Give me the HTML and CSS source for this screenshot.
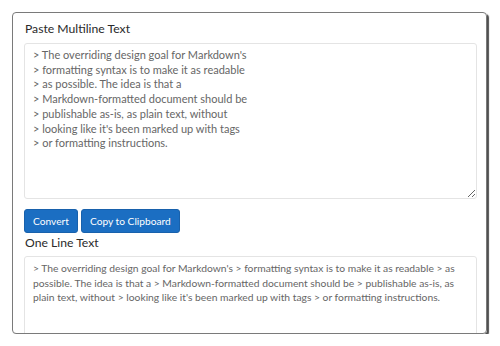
FILE: index.html
```html
<!DOCTYPE html>
<html lang="en">
<head>
  <meta charset="UTF-8">
  <meta name="viewport" content="width=device-width, initial-scale=1.0">
  <title>Multiline to One Line</title>
  <link rel="stylesheet" href="styles.css">
</head>
<body>

<div class="card">
  <h3 class="label">Paste Multiline Text</h3>
  <textarea class="box box-input" id="input">&gt; The overriding design goal for Markdown's
&gt; formatting syntax is to make it as readable
&gt; as possible. The idea is that a
&gt; Markdown-formatted document should be
&gt; publishable as-is, as plain text, without
&gt; looking like it's been marked up with tags
&gt; or formatting instructions.</textarea>

  <div class="actions">
    <button class="btn">Convert</button>
    <button class="btn">Copy to Clipboard</button>
  </div>

  <h3 class="label label-small">One Line Text</h3>
  <textarea class="box box-output" id="output">&gt; The overriding design goal for Markdown's &gt; formatting syntax is to make it as readable &gt; as possible. The idea is that a &gt; Markdown-formatted document should be &gt; publishable as-is, as plain text, without &gt; looking like it's been marked up with tags &gt; or formatting instructions.</textarea>
</div>

</body>
</html>
```

FILE: styles.css
```css
* {
  box-sizing: border-box;
  margin: 0;
  padding: 0;
}

body {
  background: #fff;
  font-family: Lato, sans-serif;
  color: #2a2a2a;
  overflow: hidden;
}

.card {
  margin: 12px 0 0 12px;
  width: 475px;
  height: 322px;
  padding: 7px 9px 0 11px;
  border: 1px solid #7a7a7a;
  border-radius: 4px;
  box-shadow: 2px 2px 1px #505050;
  overflow: hidden;
}

.label {
  font-size: 12.2px;
  font-weight: normal;
  line-height: 18px;
  margin-left: 1px;
  margin-bottom: 5px;
}

.label-small {
  margin-top: 1px;
  margin-bottom: 4px;
}

.box {
  display: block;
  width: 100%;
  border: 1px solid #e4e4e4;
  border-radius: 3px;
  padding: 4px 8px;
  font-family: Lato, sans-serif;
  font-size: 11px;
  line-height: 14.7px;
  color: #666;
  resize: vertical;
  outline: none;
}

.box-input {
  height: 156px;
}

.box-output {
  height: 90px;
  font-size: 10.3px;
  line-height: 14.5px;
  resize: none;
  overflow: hidden;
}

.actions {
  display: flex;
  gap: 3px;
  margin-top: 10px;
}

.btn {
  background-color: #1b6ec2;
  border: 1px solid #1861ac;
  color: #fff;
  font-family: Lato, sans-serif;
  font-size: 10.2px;
  height: 24px;
  padding: 0 8px;
  border-radius: 3px;
  cursor: pointer;
}
```
